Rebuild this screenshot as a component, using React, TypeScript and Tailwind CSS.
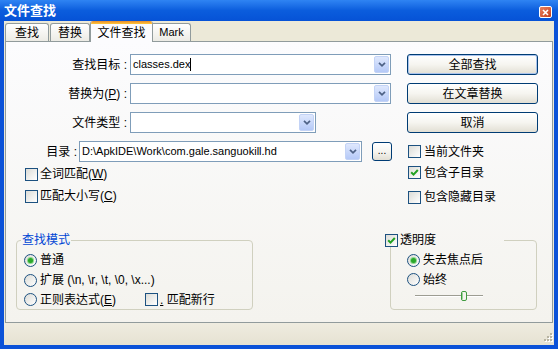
import React from "react";

function Arrow() {
  return (
    <div className="w-[15px] h-[17px] mr-[1px] rounded-[2px] border border-[#c3d3f6] bg-gradient-to-b from-[#dfe8fd] to-[#b5c9f7] flex items-center justify-center shrink-0">
      <svg width="8" height="5" viewBox="0 0 8 5">
        <path d="M1 0.8 L4 3.8 L7 0.8" fill="none" stroke="#4d6185" strokeWidth="1.7" />
      </svg>
    </div>
  );
}

function Combo({ className, children }: { className: string; children?: React.ReactNode }) {
  return (
    <div className={"h-[21px] border border-[#7f9db9] bg-white flex items-center shrink-0 " + className}>
      <div className="flex-1 pl-[2px] text-[11px] leading-none flex items-center overflow-hidden whitespace-nowrap">{children}</div>
      <Arrow />
    </div>
  );
}

function Btn({ className, children, def }: { className: string; children: React.ReactNode; def?: boolean }) {
  return (
    <div
      className={
        "h-[21px] rounded-[3px] border border-[#003c74] bg-gradient-to-b from-white via-[#f6f5f0] to-[#e2dfd4] flex items-center justify-center shrink-0 " +
        (def ? "shadow-[inset_0_0_0_1px_#a9c3ee] " : "") +
        className
      }
    >
      {children}
    </div>
  );
}

function Check({ checked }: { checked?: boolean }) {
  return (
    <div className="w-[13px] h-[13px] border border-[#1c5180] bg-gradient-to-br from-[#dcdcd7] to-white flex items-center justify-center shrink-0">
      {checked && (
        <svg width="9" height="9" viewBox="0 0 9 9">
          <path d="M1.2 4.3 L3.5 6.6 L7.8 2" fill="none" stroke="#21a121" strokeWidth="2" />
        </svg>
      )}
    </div>
  );
}

function Radio({ checked }: { checked?: boolean }) {
  return (
    <div className="w-[13px] h-[13px] rounded-full border border-[#1c5180] bg-gradient-to-br from-[#dcdcd7] to-white flex items-center justify-center shrink-0">
      {checked && <div className="w-[5px] h-[5px] rounded-full bg-[#2aa82a] shadow-[0_0_0_1px_#8fd68f]" />}
    </div>
  );
}

function U({ children }: { children: React.ReactNode }) {
  return <span className="underline underline-offset-1">{children}</span>;
}

export default function App() {
  return (
    <div className="w-[558px] h-[349px] flex flex-col font-['Liberation_Sans','Noto_Sans_CJK_SC',sans-serif] text-[12px] text-black select-none overflow-hidden">
      {/* title bar */}
      <div className="h-[21px] shrink-0 flex items-center pl-[4px] pr-[6px] bg-gradient-to-b from-[#2f84f3] via-[#0b5ddd] to-[#0652d6]">
        <div className="text-white font-bold text-[13px] leading-none flex-1">文件查找</div>
        <div className="w-[13px] h-[12px] mt-[3px] rounded-[2px] border border-white bg-gradient-to-br from-[#e9805e] to-[#c43d19] flex items-center justify-center">
          <svg width="7" height="7" viewBox="0 0 7 7">
            <path d="M1 1 L6 6 M6 1 L1 6" stroke="white" strokeWidth="1.6" />
          </svg>
        </div>
      </div>

      {/* body */}
      <div className="flex-1 flex flex-col bg-[#ece9d8] border-x-4 border-b-4 border-[#0b52d8]">
        {/* tabs */}
        <div className="h-[20px] shrink-0 flex items-end">
          <div className="ml-[1px] w-[44px] h-[18px] border border-b-0 border-[#919b9c] rounded-t-[3px] bg-gradient-to-b from-white to-[#ecebe5] flex items-center justify-center leading-none">查找</div>
          <div className="ml-[1px] w-[40px] h-[18px] border border-b-0 border-[#919b9c] rounded-t-[3px] bg-gradient-to-b from-white to-[#ecebe5] flex items-center justify-center leading-none">替换</div>
          <div className="relative z-10 -mb-[1px] w-[63px] h-[21px] border-x border-[#919b9c] rounded-t-[3px] overflow-hidden bg-[#fcfcfe] flex flex-col">
            <div className="h-[3px] bg-gradient-to-b from-[#e68b2c] to-[#ffc73c]" />
            <div className="flex-1 flex items-center justify-center leading-none">文件查找</div>
          </div>
          <div className="w-[38px] h-[18px] border border-b-0 border-l-0 border-[#919b9c] rounded-tr-[3px] bg-gradient-to-b from-white to-[#ecebe5] flex items-center justify-center text-[11px] leading-none">Mark</div>
        </div>

        {/* panel */}
        <div className="mx-[1px] h-[282px] shrink-0 border border-[#919b9c] bg-gradient-to-b from-[#fcfcfe] to-[#f4f3ee] flex flex-col pt-[12px]">
          {/* row 1 */}
          <div className="flex items-center h-[21px]">
            <div className="w-[124px] pr-[3px] text-right leading-none">查找目标 :</div>
            <Combo className="w-[261px]">
              <span>classes.dex</span>
              <span className="inline-block w-[1px] h-[13px] bg-black" />
            </Combo>
            <Btn className="ml-[16px] w-[131px]" def>
              全部查找
            </Btn>
          </div>
          {/* row 2 */}
          <div className="flex items-center h-[21px] mt-[8px]">
            <div className="w-[124px] pr-[3px] text-right leading-none">
              替换为(<U>P</U>) :
            </div>
            <Combo className="w-[261px]" />
            <Btn className="ml-[16px] w-[131px]">在文章替换</Btn>
          </div>
          {/* row 3 */}
          <div className="flex items-center h-[21px] mt-[8px]">
            <div className="w-[124px] pr-[3px] text-right leading-none">文件类型 :</div>
            <Combo className="w-[186px]" />
            <Btn className="ml-[91px] w-[131px]">取消</Btn>
          </div>
          {/* row 4 */}
          <div className="flex items-center h-[21px] mt-[8px]">
            <div className="w-[73px] pr-[2px] text-right leading-none">目录 :</div>
            <Combo className="w-[283px]">
              <span>D:\ApkIDE\Work\com.gale.sanguokill.hd</span>
            </Combo>
            <Btn className="ml-[10px] w-[20px] !h-[19px]">
              <span className="text-[10px] leading-none -mt-[2px]">...</span>
            </Btn>
            <div className="ml-[16px] flex items-center">
              <Check />
              <span className="ml-[3px] leading-none">当前文件夹</span>
            </div>
          </div>
          {/* row 5 */}
          <div className="flex items-center h-[22px] mt-[1px]">
            <div className="w-[402px] pl-[19px] flex items-center">
              <Check />
              <span className="ml-[2px] leading-none">
                全词匹配(<U>W</U>)
              </span>
            </div>
            <div className="flex items-center -mt-[3px]">
              <Check checked />
              <span className="ml-[3px] leading-none">包含子目录</span>
            </div>
          </div>
          {/* row 6 */}
          <div className="flex items-center h-[22px]">
            <div className="w-[402px] pl-[19px] flex items-center">
              <Check />
              <span className="ml-[2px] leading-none">
                匹配大小写(<U>C</U>)
              </span>
            </div>
            <div className="flex items-center mt-[2px]">
              <Check />
              <span className="ml-[3px] leading-none">包含隐藏目录</span>
            </div>
          </div>

          {/* group boxes */}
          <div className="flex items-start mt-[26px]">
            <fieldset className="ml-[10px] w-[237px] h-[77px] border border-[#d0d0bf] rounded-[4px]">
              <legend className="ml-[4px] px-[1px] leading-[14px] text-[#0046d5]">查找模式</legend>
              <div className="pt-[3px] pl-[7px] flex flex-col">
                <div className="h-[20px] flex items-center">
                  <Radio checked />
                  <span className="ml-[3px] leading-none">普通</span>
                </div>
                <div className="h-[20px] flex items-center">
                  <Radio />
                  <span className="ml-[3px] leading-none">扩展 (\n, \r, \t, \0, \x...)</span>
                </div>
                <div className="h-[19px] flex items-center">
                  <div className="w-[121px] flex items-center">
                    <Radio />
                    <span className="ml-[3px] leading-none">
                      正则表达式(<U>E</U>)
                    </span>
                  </div>
                  <Check />
                  <span className="ml-[2px] leading-none">
                    <U>.</U> 匹配新行
                  </span>
                </div>
              </div>
            </fieldset>

            <fieldset className="ml-[137px] w-[147px] h-[77px] border border-[#d0d0bf] rounded-[4px]">
              <legend className="-ml-[6px] h-[14px]">
                <div className="flex items-center h-[14px]">
                  <Check checked />
                  <span className="ml-[2px] leading-none">透明度</span>
                  <div className="w-[68px] h-[1px] shrink-0" />
                </div>
              </legend>
              <div className="pt-[3px] pl-[16px] flex flex-col">
                <div className="h-[20px] flex items-center">
                  <Radio checked />
                  <span className="ml-[3px] leading-none">失去焦点后</span>
                </div>
                <div className="h-[19px] flex items-center">
                  <Radio />
                  <span className="ml-[3px] leading-none">始终</span>
                </div>
                <div className="h-[14px] pl-[8px] flex items-center">
                  <svg width="70" height="12" viewBox="0 0 70 12">
                    <line x1="0" y1="5.5" x2="68" y2="5.5" stroke="#9d9d92" strokeWidth="1" />
                    <line x1="0" y1="6.5" x2="68" y2="6.5" stroke="#ffffff" strokeWidth="1" />
                    <rect x="46.5" y="1.5" width="5" height="9" rx="1.5" fill="#f4f4ee" stroke="#3f9b3f" strokeWidth="1" />
                    <line x1="47.5" y1="3" x2="47.5" y2="9" stroke="#9bd59b" strokeWidth="1" />
                  </svg>
                </div>
              </div>
            </fieldset>
          </div>
        </div>

        {/* bottom strip */}
        <div className="flex-1 flex items-end justify-end pr-[1px] pb-[1px] bg-gradient-to-b from-[#efece0] to-[#e6e2d2]">
          <svg width="11" height="11" viewBox="0 0 11 11">
            <g fill="#ffffff">
              <rect x="9" y="1" width="2" height="2" />
              <rect x="6" y="4" width="2" height="2" />
              <rect x="9" y="4" width="2" height="2" />
              <rect x="3" y="7" width="2" height="2" />
              <rect x="6" y="7" width="2" height="2" />
              <rect x="9" y="7" width="2" height="2" />
            </g>
            <g fill="#b8b4a2">
              <rect x="8" y="0" width="2" height="2" />
              <rect x="5" y="3" width="2" height="2" />
              <rect x="8" y="3" width="2" height="2" />
              <rect x="2" y="6" width="2" height="2" />
              <rect x="5" y="6" width="2" height="2" />
              <rect x="8" y="6" width="2" height="2" />
            </g>
          </svg>
        </div>
      </div>
    </div>
  );
}
